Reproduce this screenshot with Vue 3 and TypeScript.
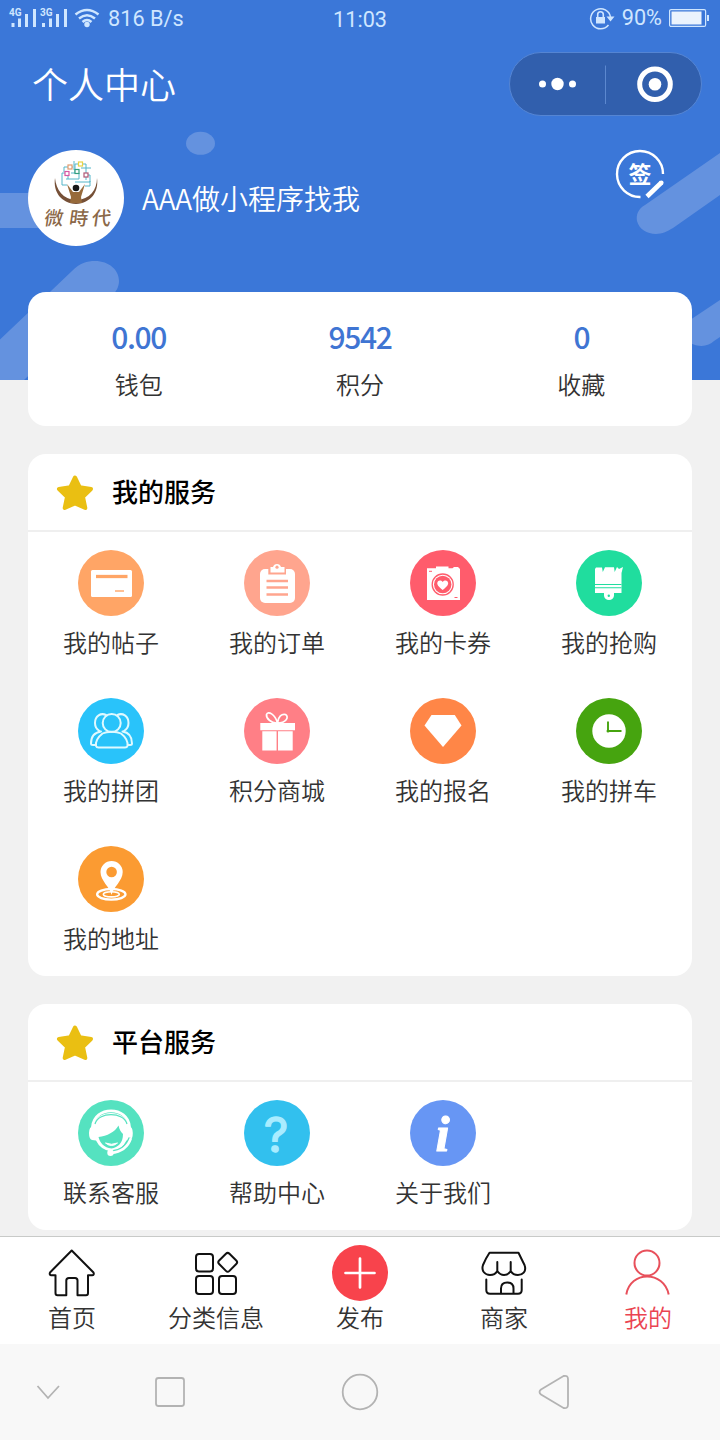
<script setup lang="ts">
interface Entry {
  name: string
  label: string
  color?: string
}

interface Section {
  title: string
  items: Entry[]
}

const stats: { value: string; label: string }[] = [
  { value: '0.00', label: '钱包' },
  { value: '9542', label: '积分' },
  { value: '0', label: '收藏' },
]

const sections: Section[] = [
  {
    title: '我的服务',
    items: [
      { name: 'post', label: '我的帖子', color: '#ffa566' },
      { name: 'order', label: '我的订单', color: '#ffa58e' },
      { name: 'coupon', label: '我的卡券', color: '#ff5c6c' },
      { name: 'rush', label: '我的抢购', color: '#20dd9e' },
      { name: 'group', label: '我的拼团', color: '#29c3fa' },
      { name: 'gift', label: '积分商城', color: '#ff7f86' },
      { name: 'signup', label: '我的报名', color: '#ff8647' },
      { name: 'carpool', label: '我的拼车', color: '#46a40f' },
      { name: 'address', label: '我的地址', color: '#fb9b32' },
    ],
  },
  {
    title: '平台服务',
    items: [
      { name: 'support', label: '联系客服', color: '#55e2c0' },
      { name: 'help', label: '帮助中心', color: '#32c0ee' },
      { name: 'about', label: '关于我们', color: '#6796f4' },
    ],
  },
]

const tabs: Entry[] = [
  { name: 'home', label: '首页' },
  { name: 'category', label: '分类信息' },
  { name: 'publish', label: '发布' },
  { name: 'store', label: '商家' },
  { name: 'mine', label: '我的' },
]
const activeTab = 'mine'
</script>

<template>
  <div class="page">
    <header class="header">
      <svg class="decor" viewBox="0 0 720 380" width="720" height="380">
        <ellipse cx="200.500" cy="143.300" rx="14.500" ry="11.500" />
        <rect x="-20" y="193" width="80" height="35" />
        <path d="M0 339.500 L72 271 C80 263 87 261 95 261 C109 261 119 270 119 281 C119 287 116 292 111 297 L24 380 H0Z" />
        <path d="M720 153 L645 205 C638 209 636 215 637 221 C639 229 647 234 656 234 C662 234 668 231 673 228 L720 195Z" />
        <path d="M720 300 L690 320 V343 C700 348 709 346 714 341 L720 337Z" />
      </svg>

      <div class="status">
        <svg class="signal" viewBox="0 0 94 28" width="94" height="28">
          <g fill="#cfe6ff">
            <rect x="3.500" y="23" width="3" height="4" />
            <rect x="10" y="18.500" width="3" height="8.500" />
            <rect x="17" y="14" width="3" height="13" />
            <rect x="25" y="9" width="3" height="18" />
            <rect x="34" y="23" width="3" height="4" />
            <rect x="41" y="18.500" width="3" height="8.500" />
            <rect x="48" y="14" width="3" height="13" />
            <rect x="56" y="9" width="3" height="18" />
            <text x="1" y="16">4G</text>
            <text x="32" y="16">3G</text>
            <circle cx="79" cy="24.500" r="2.700" />
          </g>
          <path d="M67.500 14.500 Q79 5.500 90.500 14.500 M71 18.500 Q79 12 87 18.500 M74.500 22 Q79 18 83.500 22" fill="none" stroke="#cfe6ff" stroke-width="2.500" />
        </svg>
        <span class="speed">816 B/s</span>
        <span class="time">11:03</span>
        <span class="power">
          <svg viewBox="0 0 28 24" width="28" height="24">
            <path d="M19.500 19 A10 10 0 1 1 21.500 11" fill="none" stroke="#cfe6ff" stroke-width="1.500" />
            <path d="M17.500 10.500 H25.500 L21.500 15.500Z M7 11 H16 V17.500 H7Z" fill="#cfe6ff" />
            <path d="M8.700 11.500 V8.500 A2.800 2.800 0 0 1 14.300 8.500 V11.500" fill="none" stroke="#cfe6ff" stroke-width="1.600" />
          </svg>
          <span class="percent">90%</span>
          <svg viewBox="0 0 42 20" width="42" height="20">
            <rect x="1.600" y="1.600" width="36" height="16.800" rx="1.500" fill="none" stroke="#cfe6ff" stroke-width="1.200" />
            <rect x="3.500" y="3.500" width="30" height="13" fill="#ebf3fd" />
            <rect x="39" y="7" width="2" height="6" fill="#cfe6ff" />
          </svg>
        </span>
      </div>

      <div class="nav">
        <h1 class="nav-title">个人中心</h1>
        <div class="capsule">
          <svg viewBox="0 0 191 62" width="191" height="62">
            <g fill="#fff">
              <circle cx="32.500" cy="31" r="3.500" />
              <circle cx="47.500" cy="31" r="6.200" />
              <circle cx="62.500" cy="31" r="3.500" />
              <circle cx="145" cy="31.200" r="6.300" />
            </g>
            <path d="M95.500 12.500 V51" stroke="#5c88cf" />
            <circle cx="145" cy="31.200" r="15.300" fill="none" stroke="#fff" stroke-width="5" />
          </svg>
        </div>
      </div>

      <div class="profile">
        <svg class="avatar" viewBox="0 0 96 96" width="96" height="96">
          <circle cx="48" cy="48" r="48" fill="#fff" />
          <path d="M27 28 C25 42 33 53 48 54 C63 53 71 42 69 28 C69 40 62 49 48 50.500 C35 49 28 40 27 28Z" fill="#765037" />
          <path d="M39 34 L45 42 H51 L57 34 L53 47 L54 53 H42 L43 47Z" fill="#976a3b" />
          <g fill="none" stroke="#55b6c9" stroke-width="1">
            <path d="M34 35 V23 H40 M36 22 V17 H45 M38 29 H51 V23 M47 23 V14 H58 V30 M47 32 H62 V25 H56 M34 35 H39 M57 36 H62 V31 M46 11 V20 M40 25 V29 M43 23 H49 M53 18 H63" />
          </g>
          <g fill="#fff" stroke-width="1.200">
            <rect x="40" y="15" width="4" height="4" stroke="#e19b6e" />
            <rect x="50.500" y="12" width="4" height="4" stroke="#e8d347" />
            <rect x="37" y="21.500" width="4" height="4" stroke="#d756a2" />
            <rect x="47" y="19.500" width="4" height="4" stroke="#349e80" />
            <rect x="56" y="23" width="4" height="4" stroke="#b15875" />
          </g>
          <circle cx="48" cy="38" r="3.300" fill="#171717" />
          <g class="brand" transform="translate(11 0) skewX(-8)">
            <text x="15" y="75.500">微</text>
            <text x="40" y="75.500">時</text>
            <text x="62.500" y="75.500">代</text>
          </g>
        </svg>
        <span class="nickname">AAA做小程序找我</span>
        <svg class="sign" viewBox="0 0 50 50" width="50" height="50">
          <path d="M25.500 48 A23 23 0 1 1 48 25" fill="none" stroke="#fff" stroke-width="2.400" />
          <path d="M46.500 33.500 L32 47.500" stroke="#fff" stroke-width="4.600" />
          <circle cx="46.300" cy="33.700" r="2.300" fill="#fff" />
          <text x="25" y="34">签</text>
        </svg>
      </div>
    </header>

    <main class="content">
      <section class="card stats">
        <div v-for="stat in stats" :key="stat.label" class="stat">
          <span class="stat-value">{{ stat.value }}</span>
          <span class="stat-label">{{ stat.label }}</span>
        </div>
      </section>

      <section v-for="section in sections" :key="section.title" class="card">
        <h2 class="card-head">
          <svg viewBox="0 0 38 36" width="38" height="36">
            <path d="M19 3.500 L23.800 13.300 L35 15 L27 22.800 L29.300 34 L19 29.500 L8.700 34 L11 22.800 L3 15 L14.200 13.300Z" fill="#eabf12" stroke="#eabf12" stroke-width="4" stroke-linejoin="round" />
          </svg>
          <span class="card-title">{{ section.title }}</span>
        </h2>
        <div class="grid">
          <div v-for="item in section.items" :key="item.name" class="item">
            <svg viewBox="0 0 66 66" width="66" height="66">
              <circle cx="33" cy="33" r="33" :fill="item.color" />
              <g v-if="item.name === 'post'">
                <rect x="13" y="20" width="41" height="27" rx="1.500" fill="#fff" />
                <path d="M18 26.500 H49.500" :stroke="item.color" stroke-width="3.300" />
                <path d="M37 41 H46" :stroke="item.color" stroke-width="1.400" />
              </g>
              <g v-else-if="item.name === 'order'">
                <rect x="16" y="19" width="35" height="34" rx="5" fill="#fff" />
                <path d="M24.300 18 H42 V24.500 H24.300Z" :fill="item.color" />
                <path d="M26.500 17 H29 A4.200 4.200 0 0 1 37 17 H40.500 V22.500 H26.500Z" fill="#fff" />
                <circle cx="33" cy="17.200" r="1.600" :fill="item.color" />
                <path d="M22.500 31 H44 M22.500 37.500 H44 M22.500 44.500 H44" :stroke="item.color" stroke-width="2.600" />
              </g>
              <g v-else-if="item.name === 'coupon'">
                <path d="M17 18.300 H26 V16.500 H38.500 V18.300 H42.500 L44 17 H48 L50 19 V50 H17Z" fill="#fff" />
                <circle cx="32.700" cy="34.500" r="10.500" fill="none" :stroke="item.color" stroke-width="1.300" />
                <circle cx="32.700" cy="34.500" r="8.700" :fill="item.color" />
                <path d="M32.700 40 C28 36.500 27 34.500 27.300 32.800 C28 30 31 30 32.700 32 C34.400 30 37.400 30 38.100 32.800 C38.400 34.500 37.400 36.500 32.700 40Z" fill="#fff" />
                <path d="M19 21.300 H22 M44.500 47.500 H47.500" :stroke="item.color" stroke-width="1" />
              </g>
              <g v-else-if="item.name === 'rush'">
                <path d="M20 17.500 H26 L26.800 22 L29 17.200 H38 L38.700 22 L41 17 L43 19 L47 17 L45.500 23 V43 H38 V45.500 A5 4.500 0 0 1 28 45.500 V43 H19 V19Z" fill="#fff" />
                <path d="M19 34.500 H45.500 M19 37.800 H45.500" :stroke="item.color" stroke-width="1.100" />
                <circle cx="32.800" cy="45.800" r="1.200" :fill="item.color" />
              </g>
              <g v-else-if="item.name === 'group'" fill="none" stroke="#dff9ff" stroke-width="2" stroke-linejoin="round" stroke-linecap="round">
                <circle cx="33.700" cy="25" r="9" />
                <path d="M28 17 C23 14.500 17 18 17 25 C17 28.500 19 31.500 21.500 33 M39.500 17 C44.500 14.500 50.500 18 50.500 25 C50.500 28.500 48.500 31.500 46 33" />
                <path d="M24.500 35.500 C29 33 38.500 33 43 35.500 C47.500 39 50 44 49.500 48 Q49 49.500 47 49.500 H20.500 Q18.500 49.500 18 48 C17.500 44 20 39 24.500 35.500Z" />
                <path d="M23 33.500 C16 34.500 13 39 13 45.500 Q13 47 15 47 H17.500 M44.500 33.500 C51.500 34.500 54 39 54 45.500 Q54 47 52 47 H50" />
              </g>
              <g v-else-if="item.name === 'gift'">
                <path d="M16.300 25 H51 V32.300 H16.300Z M18.300 33.300 H32.600 V52.500 H18.300Z M34 33.300 H48.700 V52.500 H34Z" fill="#fff" />
                <path d="M33.500 25 C27 25.500 22 20 22.500 16.500 C24 12.500 31 16 33.500 25 C34 18.500 38 15.500 41.500 16.500 C45.500 19 42 25 33.500 25Z" fill="none" stroke="#fff" stroke-width="1.700" />
              </g>
              <path v-else-if="item.name === 'signup'" d="M21.500 17 H44.800 L51.500 27.500 L33 49 L14.500 27.500Z" fill="#fff" />
              <g v-else-if="item.name === 'carpool'">
                <circle cx="33" cy="33" r="16.700" fill="#fff" />
                <path d="M32 23.500 V33 H45.500" fill="none" :stroke="item.color" stroke-width="1.900" />
                <circle cx="32" cy="33" r="1.500" :fill="item.color" />
              </g>
              <g v-else-if="item.name === 'address'">
                <ellipse cx="33.300" cy="48.300" rx="14.200" ry="5.300" fill="none" stroke="#fff" stroke-width="2.300" />
                <ellipse cx="33.300" cy="48.300" rx="8" ry="2.600" fill="none" stroke="#fff" stroke-width="1.600" />
                <path d="M33.600 49 C32 41 22.500 35 22.500 26 A11 11 0 0 1 44.700 26 C44.700 35 35.200 41 33.600 49Z" fill="#fff" />
                <circle cx="33.600" cy="26" r="5.300" :fill="item.color" />
              </g>
              <g v-else-if="item.name === 'support'">
                <path d="M14.500 27 C16 5.500 50 5.500 51.500 27" fill="none" stroke="#fff" stroke-width="2.800" />
                <path d="M15 26 C19 8.500 47 8.500 51 26 Q54.800 27 54.800 33 Q54.800 39 52 40 L48.500 40.500 Q44 50 33.500 51.500 Q22.500 50 18 40.500 L14 40 Q11 39 11 33 Q11 27 15 26Z" fill="#fff" />
                <path d="M17 24 C20 11.500 46 11.500 49 24" fill="none" :stroke="item.color" stroke-width="1.200" />
                <path d="M20.500 37 C29 36 37 32 40.500 25.500 C41.500 30 43 32 45 34 C45 43 40 47.500 33.500 48.500 C26 47.500 22 43 20.500 37Z" :fill="item.color" />
                <path d="M27.500 43 Q33.500 48 39.500 43 Q33.500 45.500 27.500 43Z" fill="#fff" stroke="#fff" />
                <path d="M53 38 C50 47 43 52 33 53" fill="none" :stroke="item.color" stroke-width="5" />
                <path d="M53 38 C50 47 43 52 33 53" fill="none" stroke="#fff" stroke-width="2.500" />
                <circle cx="32.500" cy="52.700" r="3.200" fill="#fff" />
              </g>
              <text v-else-if="item.name === 'help'" class="glyph-help" x="32" y="51.500">?</text>
              <text v-else class="glyph-about" x="32.500" y="51">i</text>
            </svg>
            <span class="item-label">{{ item.label }}</span>
          </div>
        </div>
      </section>
    </main>

    <nav class="tabbar">
      <div v-for="tab in tabs" :key="tab.name" class="tab" :class="{ active: tab.name === activeTab }">
        <svg viewBox="0 0 56 56" width="56" height="56" fill="none" stroke="#111" stroke-width="2" stroke-linejoin="round" stroke-linecap="round">
          <path v-if="tab.name === 'home'" d="M27.700 5.500 L49.500 27.500 Q50.500 30 48 30.300 H44 V48 Q44 50.300 42 50.300 H33.500 V35.500 Q33.500 33 31 33 H25 Q22.300 33 22.300 35.500 V50.300 H13.500 Q11.500 50.300 11.500 48 V30.300 H7.500 Q5 30 6 27.500Z" />
          <g v-else-if="tab.name === 'category'">
            <rect x="8" y="9" width="17" height="17.500" rx="3" />
            <rect x="8" y="31" width="17" height="18" rx="3" />
            <rect x="31" y="31" width="17" height="18" rx="3" />
            <rect x="32.400" y="10" width="14.600" height="14.600" rx="2.500" transform="rotate(45 39.700 17.300)" />
          </g>
          <g v-else-if="tab.name === 'publish'">
            <circle cx="28" cy="28" r="28" fill="#f8434c" stroke="none" />
            <path d="M28 13.500 V42.500 M13.500 28 H42.500" stroke="#fff" stroke-width="2.700" />
          </g>
          <g v-else-if="tab.name === 'store'">
            <path d="M13.500 7.800 H42.500 Q45 13 48.500 20 C51 27 46 30 42 30 Q37 30 34.700 26 Q32 30 28 30 Q24 30 21.300 26 Q19 30 14 30 C9 30 5 26 7 20 Q10 13 13.500 7.800Z M21.300 17 V26 M34.700 17 V26" />
            <path d="M10.300 34.500 V45 Q10.300 48.700 14 48.700 H42 Q45.700 48.700 45.700 45 V34.500 M25 48.700 V43.500 Q25 37.500 31.200 37.500 Q37.500 37.500 37.500 43.500 V48.700" />
          </g>
          <g v-else stroke="#e8505b" stroke-linecap="butt">
            <circle cx="27" cy="18" r="12.500" />
            <path d="M6.300 49.500 C10 25.500 44 25.500 48.700 49.500" />
          </g>
        </svg>
        <span class="tab-label">{{ tab.label }}</span>
      </div>
    </nav>

    <footer class="sysnav">
      <svg viewBox="0 0 40 40" width="40" height="40"><path d="M9.500 14 L20 26 L31 14" /></svg>
      <svg viewBox="0 0 40 40" width="40" height="40"><rect x="6" y="6" width="28" height="28" rx="2.500" /></svg>
      <svg viewBox="0 0 40 40" width="40" height="40"><circle cx="20" cy="20" r="17.300" /></svg>
      <svg viewBox="0 0 40 40" width="40" height="40"><path d="M7 17.500 L29.500 4 Q34 3 34 7 V32.500 Q34 37 29.500 36 L7 22.500 Q4 20 7 17.500Z" /></svg>
    </footer>
  </div>
</template>

<style>
body {
  margin: 0;
}
</style>

<style scoped>
.page {
  width: 720px;
  height: 1440px;
  overflow: hidden;
  display: flex;
  flex-direction: column;
  background: #f1f1f1;
  color: #333;
  font-family: "Noto Sans CJK SC", sans-serif;
  font-weight: 350;
}
svg {
  display: block;
  flex: none;
}
.header {
  position: relative;
  flex: none;
  height: 380px;
  background: #3b77d8;
  color: #fff;
}
.decor {
  position: absolute;
  inset: 0;
  fill: #6492df;
}
.status {
  position: relative;
  display: grid;
  grid-template-columns: 100px 1fr auto 1fr;
  align-items: center;
  height: 36px;
  padding: 0 10px 0 8px;
  color: #cfe6ff;
  font: 21.7px/26px Roboto, sans-serif;
}
.signal {
  margin-top: -8px;
}
.signal text {
  font: bold 10px Roboto, sans-serif;
}
.speed {
  padding-top: 2px;
}
.time {
  position: absolute;
  left: 333px;
  top: 7px;
}
.power {
  grid-column: 4;
  justify-self: end;
  display: flex;
  align-items: center;
}
.percent {
  margin: 0 6px 0 5px;
}
.nav {
  position: relative;
  display: flex;
  justify-content: space-between;
  align-items: center;
  height: 96px;
  padding: 0 18px 0 32px;
}
.nav-title {
  margin: 0;
  padding-bottom: 3px;
  font-size: 36px;
  font-weight: 350;
  line-height: 48px;
}
.capsule {
  border: 1px solid #5585d3;
  border-radius: 32px;
  background: #315fad;
}
.profile {
  position: relative;
  display: flex;
  align-items: center;
  margin: 18px 55px 0 28px;
  height: 96px;
}
.brand {
  fill: #8b6848;
  font: 500 19px "Noto Sans CJK TC", sans-serif;
}
.nickname {
  flex: 1;
  margin-left: 18px;
  font-size: 28px;
  line-height: 40px;
}
.sign {
  align-self: flex-start;
  margin-top: -1px;
}
.sign text {
  fill: #fff;
  font-size: 23px;
  font-weight: 700;
  text-anchor: middle;
}
.content {
  position: relative;
  flex: none;
  display: flex;
  flex-direction: column;
  gap: 28px;
  height: 944px;
  margin-top: -88px;
  padding: 0 28px;
  box-sizing: border-box;
}
.card {
  flex: none;
  border-radius: 18px;
  background: #fff;
}
.stats {
  display: grid;
  grid-template-columns: repeat(3, 1fr);
  height: 134px;
  box-sizing: border-box;
  padding-top: 24px;
}
.stat {
  display: flex;
  flex-direction: column;
  align-items: center;
}
.stat-value {
  color: #3f75d3;
  font-size: 30px;
  font-weight: 500;
  letter-spacing: -1.4px;
  line-height: 40px;
}
.stat-label {
  margin-top: 11px;
  font-size: 24px;
  line-height: 34px;
}
.card-head {
  display: flex;
  align-items: center;
  gap: 18px;
  height: 76px;
  margin: 0;
  padding-left: 28px;
  border-bottom: 2px solid #efefef;
  color: #000;
  font-size: 26px;
  font-weight: 500;
}
.card-title {
  padding-bottom: 3px;
}
.grid {
  display: grid;
  grid-template-columns: repeat(4, 1fr);
}
.item {
  display: flex;
  flex-direction: column;
  align-items: center;
  height: 130px;
  padding-top: 18px;
}
.item-label {
  margin-top: 9px;
  font-size: 24px;
  line-height: 34px;
}
.glyph-help {
  fill: #a9ecff;
  stroke: #a9ecff;
  stroke-width: 1.4;
  stroke-linejoin: round;
  font: 400 48px Inter, sans-serif;
  text-anchor: middle;
}
.glyph-about {
  fill: #fff;
  stroke: #fff;
  stroke-width: 1;
  stroke-linejoin: round;
  font: italic bold 51px "Liberation Serif", serif;
  text-anchor: middle;
}
.tabbar {
  position: relative;
  flex: none;
  display: grid;
  grid-template-columns: repeat(5, 1fr);
  height: 108px;
  box-sizing: border-box;
  border-top: 1px solid #c8cac8;
  background: #fff;
}
.tab {
  display: flex;
  flex-direction: column;
  align-items: center;
  padding-top: 8px;
}
.tab-label {
  margin-top: -1px;
  font-size: 24px;
  line-height: 34px;
}
.active {
  color: #ea4451;
}
.sysnav {
  flex: none;
  display: grid;
  grid-template-columns: 96px 148px 232px 156px;
  place-items: center;
  height: 96px;
  background: #f8f8f8;
  fill: none;
  stroke: #b3b3b3;
  stroke-width: 1.8;
}
</style>
